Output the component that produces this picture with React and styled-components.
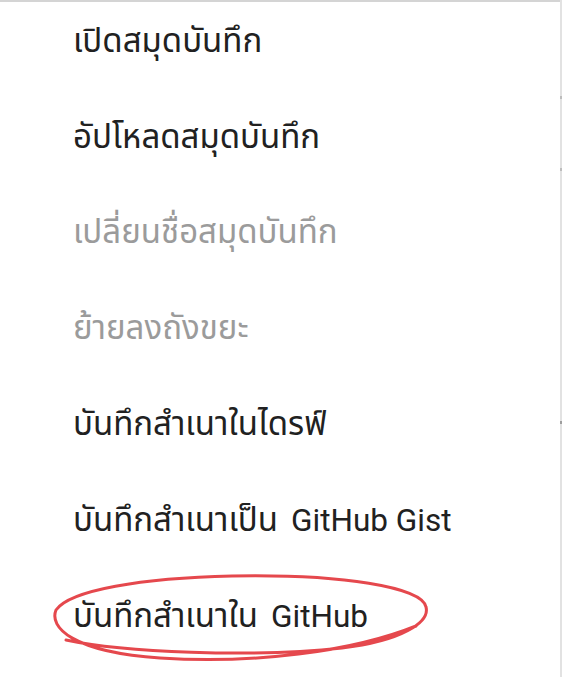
import React from 'react';
import styled, { createGlobalStyle } from 'styled-components';

const GlobalStyle = createGlobalStyle`
  html, body {
    margin: 0;
    padding: 0;
    background: #ffffff;
  }
`;

const items = [
  { thai: 'เปิดสมุดบันทึก' },
  { thai: 'อัปโหลดสมุดบันทึก' },
  { thai: 'เปลี่ยนชื่อสมุดบันทึก', disabled: true },
  { thai: 'ย้ายลงถังขยะ', disabled: true },
  { thai: 'บันทึกสำเนาในไดรฟ์' },
  { thai: 'บันทึกสำเนาเป็น', latin: 'GitHub Gist' },
  { thai: 'บันทึกสำเนาใน', latin: 'GitHub', circled: true },
];

// hand drawn red loop round the last item
const Scribble = () => (
  <Loop width="380" height="100" viewBox="0 0 380 100">
    <path
      d="M 14 78
         C 70 90, 200 96, 290 86
         C 350 79, 378 60, 374 45
         C 370 25, 290 12, 180 14
         C 90 16, 18 28, 4 48
         C -3 65, 20 90, 108 96
         C 200 102, 300 90, 364 64"
      fill="none"
      stroke="#e5484d"
      strokeWidth="3"
      strokeLinecap="round"
    />
  </Loop>
);

const App = () => {
  return (
    <>
      <GlobalStyle />
      <Screen>
        <Panel>
          <List>
            {items.map((item, i) => (
              <Item key={i} $disabled={item.disabled}>
                <Label>
                  <Thai>{item.thai}</Thai>
                  {item.latin && <Latin>{item.latin}</Latin>}
                </Label>
                {item.circled && <Scribble />}
              </Item>
            ))}
          </List>
        </Panel>
        <Edge />
      </Screen>
    </>
  );
};

const Screen = styled.div`
  display: flex;
  width: 562px;
  height: 677px;
  overflow: hidden;
  background: #ffffff;
`;

const Panel = styled.div`
  flex: 0 0 560px;
  overflow: hidden;
  border-top: 2px solid #d4d4d4;
  box-sizing: border-box;
`;

const List = styled.div`
  display: flex;
  flex-direction: column;
  margin-top: -8px;
`;

const Edge = styled.div`
  flex: 0 0 2px;
  background:
    linear-gradient(#bdbdbd, #bdbdbd) 0 96px / 2px 3px no-repeat,
    linear-gradient(#bdbdbd, #bdbdbd) 0 168px / 2px 3px no-repeat,
    linear-gradient(#9e9e9e, #9e9e9e) 0 421px / 2px 3px no-repeat,
    #e2e2e2;
`;

const Item = styled.div`
  position: relative;
  display: flex;
  align-items: center;
  flex: 0 0 95.8px;
  padding-left: 73px;
  color: ${(p) => (p.$disabled ? '#9b9b9b' : '#212121')};
`;

const Label = styled.span`
  display: flex;
  align-items: baseline;
  gap: 13px;
  white-space: nowrap;
  line-height: 44px;
`;

const Thai = styled.span`
  font-family: 'Noto Sans Thai', Roboto, sans-serif;
  font-size: 33px;
`;

const Latin = styled.span`
  font-family: Roboto, 'Liberation Sans', sans-serif;
  font-size: 31.5px;
`;

const Loop = styled.svg`
  position: absolute;
  left: 52px;
  top: calc(50% - 55px);
  pointer-events: none;
`;

export default App;
